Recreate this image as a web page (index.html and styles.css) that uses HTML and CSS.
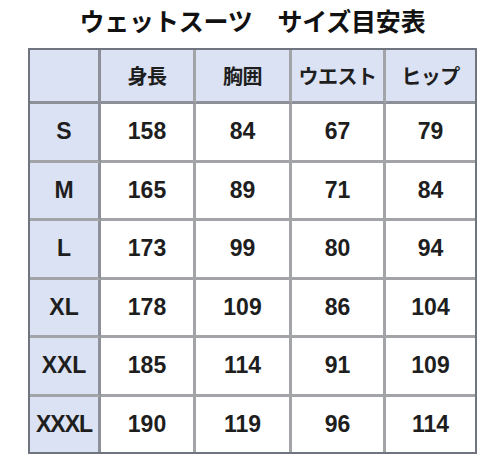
FILE: index.html
```html
<!DOCTYPE html>
<html lang="ja">
<head>
<meta charset="utf-8">
<title>ウェットスーツ サイズ目安表</title>
<link rel="stylesheet" href="styles.css">
</head>
<body>
<div class="wrap">
  <h1 class="title">ウェットスーツ　サイズ目安表</h1>
  <table class="sizes">
    <colgroup>
      <col class="c1"><col class="c2"><col class="c3"><col class="c4"><col class="c5">
    </colgroup>
    <thead>
      <tr><th class="corner"></th><th>身長</th><th>胸囲</th><th>ウエスト</th><th>ヒップ</th></tr>
    </thead>
    <tbody>
      <tr><th>S</th><td>158</td><td>84</td><td>67</td><td>79</td></tr>
      <tr><th>M</th><td>165</td><td>89</td><td>71</td><td>84</td></tr>
      <tr><th>L</th><td>173</td><td>99</td><td>80</td><td>94</td></tr>
      <tr><th>XL</th><td>178</td><td>109</td><td>86</td><td>104</td></tr>
      <tr><th>XXL</th><td>185</td><td>114</td><td>91</td><td>109</td></tr>
      <tr><th class="xxxl">XXXL</th><td>190</td><td>119</td><td>96</td><td>114</td></tr>
    </tbody>
  </table>
</div>
</body>
</html>
```
FILE: styles.css
```css
html, body {
  margin: 0;
  padding: 0;
  background: #ffffff;
}
body {
  font-family: "Noto Sans CJK JP", "Noto Sans", sans-serif;
  color: #1e1e1e;
}
.wrap {
  width: 449px;
  margin-left: 28px;
}
.title {
  margin: 0;
  height: 48px;
  line-height: 40px;
  font-size: 25px;
  font-weight: 700;
  text-align: center;
  color: #111;
  letter-spacing: -0.2px;
}
.sizes {
  border-collapse: separate;
  border-spacing: 0;
  border: 2px solid #6f747e;
  table-layout: fixed;
  width: 449px;
}
.c1 { width: 71px; }
.c2 { width: 95px; }
.c3 { width: 96px; }
.c4 { width: 94px; }
.c5 { width: 89px; }
.sizes th, .sizes td {
  padding: 0;
  text-align: center;
  vertical-align: middle;
  border-right: 3px solid #a2a4a8;
  border-bottom: 3px solid #a2a4a8;
  font-weight: 700;
}
.sizes tr > :last-child { border-right: none; }
.sizes tbody tr:last-child > * { border-bottom: none; }
.sizes thead th {
  height: 51px;
  background: #dbe2f3;
  font-size: 20px;
  letter-spacing: -0.5px;
}
.sizes thead th:first-child,
.sizes tbody th {
  border-right-color: #8d9099;
}
.sizes thead th {
  border-bottom-color: #8d9099;
}
.sizes tbody th {
  background: #dbe2f3;
  font-size: 23px;
  font-family: "Liberation Sans", "Noto Sans", sans-serif;
}
.sizes tbody td {
  height: 55.5px;
  background: #ffffff;
  font-size: 23px;
  font-family: "Liberation Sans", "Noto Sans", sans-serif;
}
.xxxl { letter-spacing: -1px; }
```
